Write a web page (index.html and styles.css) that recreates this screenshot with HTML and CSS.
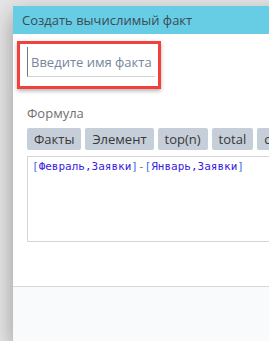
FILE: index.html
```html
<!DOCTYPE html>
<html lang="ru">
<head>
    <meta charset="UTF-8">
    <meta name="viewport" content="width=device-width, initial-scale=1.0">
    <title>Создать вычислимый факт</title>
    <link rel="stylesheet" href="styles.css">
</head>
<body>
    <div class="page">
        <div class="modal">
            <div class="modal-header">Создать вычислимый факт</div>

            <div class="modal-body">
                <div class="name-field">
                    <input type="text" class="name-input" placeholder="Введите имя факта">
                </div>

                <div class="formula">
                    <div class="formula-label">Формула</div>
                    <div class="toolbar">
                        <button class="tool-button">Факты</button>
                        <button class="tool-button">Элемент</button>
                        <button class="tool-button">top(n)</button>
                        <button class="tool-button">total</button>
                        <button class="tool-button">count</button>
                    </div>
                    <div class="formula-editor"><span class="br">[</span><span class="ref">Февраль,Заявки</span><span class="br">]</span><span class="op">-</span><span class="br">[</span><span class="ref">Январь,Заявки</span><span class="br">]</span></div>
                </div>
            </div>

            <div class="modal-footer"></div>
        </div>
    </div>
</body>
</html>
```

FILE: styles.css
```css
html, body {
    margin: 0;
    padding: 0;
    height: 100%;
    overflow: hidden;
}

body {
    font-family: "Open Sans", Arial, sans-serif;
    background-color: #e6e6e6;
    color: #333;
}

.page {
    padding: 6px 0 0 13px;
}

.modal {
    width: 320px;
    background-color: #fff;
    box-shadow: 0 8px 22px rgba(0, 0, 0, 0.35);
}

.modal-header {
    height: 28px;
    line-height: 28px;
    padding-left: 9px;
    background-color: #67cde4;
    color: #3b4a56;
    font-size: 13px;
}

.modal-body {
    padding: 7px 0 44px 14px;
}

.name-field {
    width: 131px;
    height: 42px;
    margin-left: -10px;
    padding-left: 7px;
    border: 3px solid #f2403c;
    box-shadow: 0 2px 4px rgba(0, 0, 0, 0.3);
}

.name-input {
    display: block;
    width: 128px;
    height: 30px;
    margin-top: 3px;
    padding: 0 0 0 3px;
    border: none;
    border-left: 1px solid #777;
    border-bottom: 1px solid #d4d4d4;
    box-sizing: border-box;
    font-family: "Open Sans", Arial, sans-serif;
    font-size: 13px;
    outline: none;
}

.name-input::placeholder {
    color: #76869b;
}

.formula {
    margin-top: 15px;
}

.formula-label {
    font-size: 13px;
    line-height: 18px;
    color: #6f6f6f;
}

.toolbar {
    display: flex;
    gap: 4px;
    margin-top: 6px;
}

.tool-button {
    height: 22px;
    padding: 0 7px;
    border: none;
    border-radius: 2px;
    background-color: #c6ced9;
    color: #383838;
    font-family: "Open Sans", Arial, sans-serif;
    font-size: 13px;
}

.formula-editor {
    height: 78px;
    margin-top: 6px;
    padding: 3px 4px;
    border: 1px solid #d6d6d6;
    font-family: "DejaVu Sans Mono", monospace;
    font-size: 11px;
    line-height: 14px;
}

.br {
    color: #3d6ee6;
}

.ref {
    color: #3a22e2;
}

.op {
    color: #777;
}

.modal-footer {
    height: 54px;
    border-top: 1px solid #d8d8d8;
    background-color: #f9fafc;
}
```
